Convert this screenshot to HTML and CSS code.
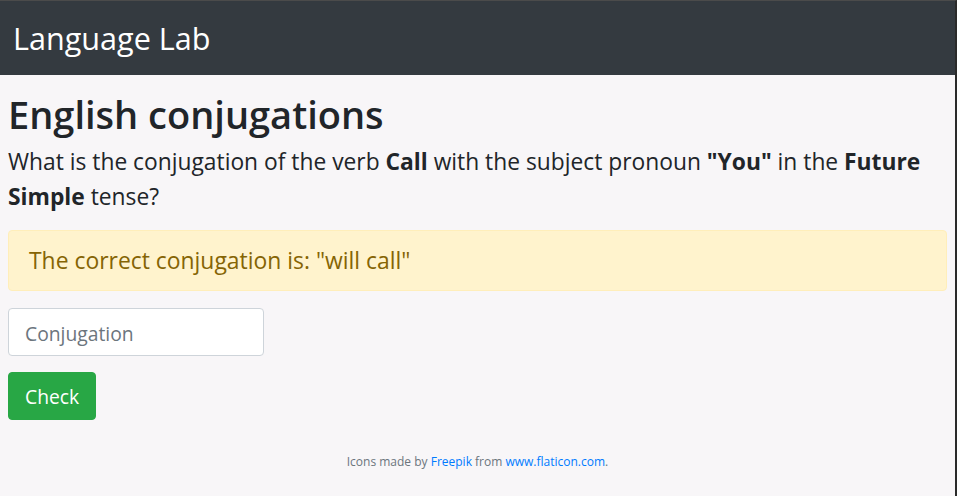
FILE: index.html
```html
<!DOCTYPE html>
<html lang="en">
<head>
<meta charset="utf-8">
<title>Language Lab</title>
<link rel="stylesheet" href="styles.css">
</head>
<body>
<div class="frame">
  <nav class="navbar">
    <span class="brand">Language Lab</span>
  </nav>
  <main class="content">
    <h1 class="title">English conjugations</h1>
    <p class="question">What is the conjugation of the verb <b>Call</b> with the subject pronoun <b>"You"</b> in the <b>Future Simple</b> tense?</p>
    <div class="alert">The correct conjugation is: "will call"</div>
    <form class="form">
      <input class="input" type="text" placeholder="Conjugation">
      <button class="btn" type="button">Check</button>
    </form>
    <footer class="credits">Icons made by <a href="#">Freepik</a> from <a href="#">www.flaticon.com</a>.</footer>
  </main>
</div>
</body>
</html>
```
FILE: styles.css
```css
* { box-sizing: border-box; }
html, body { margin: 0; padding: 0; }
body {
  font-family: "Open Sans", "Noto Sans", "Liberation Sans", sans-serif;
  color: #212529;
  background: #f8f6f8;
}
.frame {
  min-height: 100vh;
  border-top: 1px solid #4b4b4b;
  border-right: 2px solid #2a2a2a;
  background: #f8f6f8;
}
.navbar {
  height: 74px;
  background: #343a40;
  display: flex;
  align-items: center;
  padding-left: 13px;
  padding-top: 2px;
}
.brand {
  color: #fff;
  font-size: 30.6px;
  line-height: 1.5;
}
.content {
  padding: 8px 8px 0;
}
.title {
  margin: 9px 0 6px;
  font-size: 38px;
  font-weight: 600;
  line-height: 1.2;
}
.question {
  margin: 0 0 16px;
  font-size: 22.8px;
  line-height: 35px;
}
.question b { font-weight: 700; }
.alert {
  background: #fff3cd;
  border: 1px solid #ffeeba;
  color: #856404;
  border-radius: 4px;
  padding: 12px 20px 12px 20px;
  font-size: 22.9px;
  line-height: 35px;
  margin-bottom: 17px;
}
.form {
  display: flex;
  flex-direction: column;
  align-items: flex-start;
  gap: 16px;
}
.input {
  width: 256px;
  height: 48px;
  padding: 10px 16px 6px;
  font-family: inherit;
  font-size: 19.3px;
  color: #495057;
  background: #fff;
  border: 1px solid #ced4da;
  border-radius: 4px;
}
.input::placeholder { color: #6c757d; }
.btn {
  height: 48px;
  padding: 9px 16px 7px;
  font-family: inherit;
  font-size: 19.3px;
  color: #fff;
  background: #28a745;
  border: 1px solid #28a745;
  border-radius: 4px;
}
.credits {
  margin-top: 33px;
  text-align: center;
  font-size: 12px;
  color: #6c757d;
}
.credits a { color: #007bff; text-decoration: none; }
```
